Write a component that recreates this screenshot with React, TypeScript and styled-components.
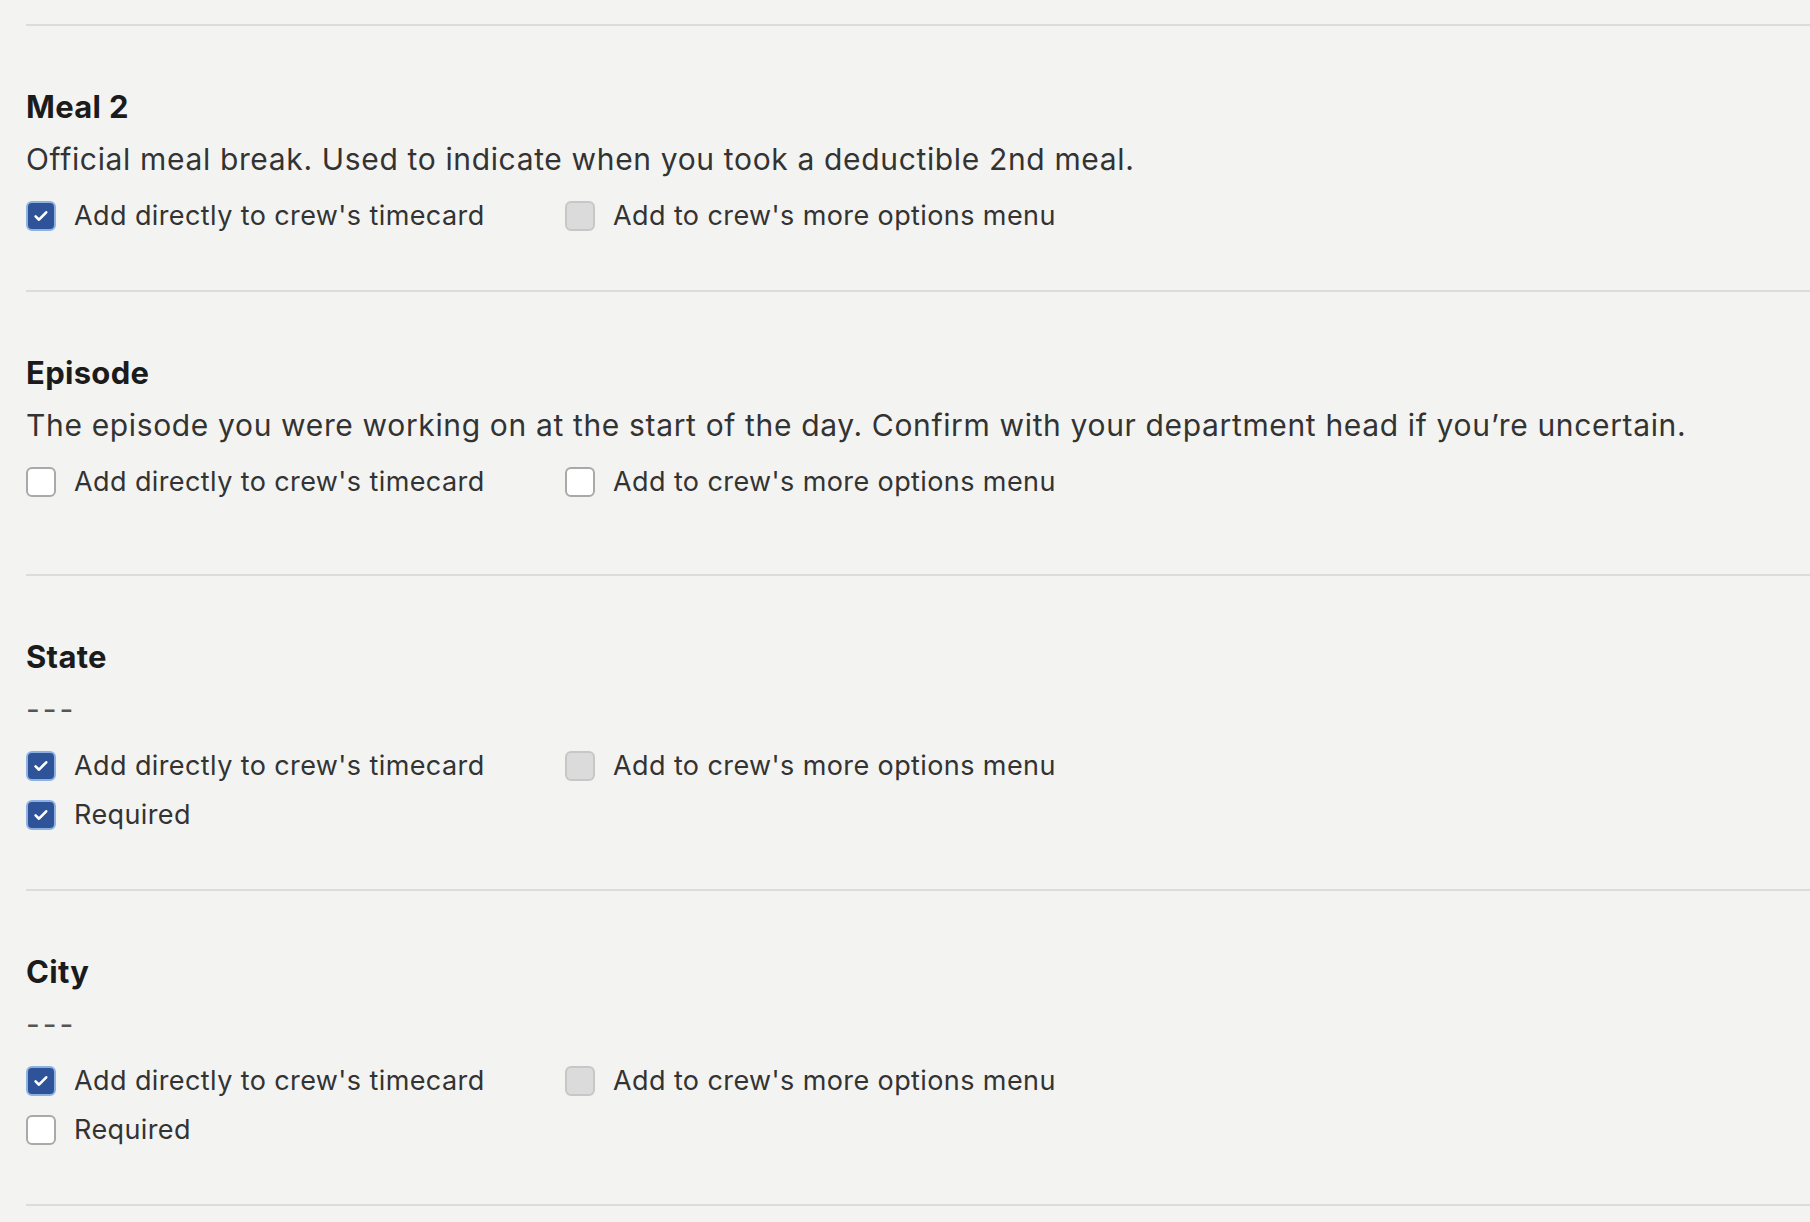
import React from "react";
import styled, { createGlobalStyle } from "styled-components";

type Field = {
  title: string
  description: string
  onTimecard: boolean
  moreOptions: "off" | "disabled"
  required?: boolean
  tall?: boolean
}

const fields: Field[] = [
  {
    title: "Meal 2",
    description: "Official meal break. Used to indicate when you took a deductible 2nd meal.",
    onTimecard: true,
    moreOptions: "disabled",
  },
  {
    title: "Episode",
    description: "The episode you were working on at the start of the day. Confirm with your department head if you’re uncertain.",
    onTimecard: false,
    moreOptions: "off",
    tall: true,
  },
  {
    title: "State",
    description: "---",
    onTimecard: true,
    moreOptions: "disabled",
    required: true,
  },
  {
    title: "City",
    description: "---",
    onTimecard: true,
    moreOptions: "disabled",
    required: false,
  },
]

type BoxState = "checked" | "unchecked" | "disabled"

function Check({ state, label }: { state: BoxState; label: string }) {
  return (
    <Option>
      <Box $state={state}>
        {state === "checked" ? (
          <svg width="18" height="18" viewBox="0 0 18 18" fill="none">
            <path d="M3.6 9.4l3.4 3.3 7.2-7.4" stroke="#fff" strokeWidth="2.6" strokeLinecap="round" strokeLinejoin="round" />
          </svg>
        ) : null}
      </Box>
      <Label>{label}</Label>
    </Option>
  )
}

export default function App() {
  return (
    <>
      <GlobalStyle />
      <Page>
        {fields.map((f) => (
          <Section key={f.title} $tall={f.tall}>
            <Title>{f.title}</Title>
            <Description $muted={f.description === "---"}>{f.description}</Description>
            <Options>
              <Check state={f.onTimecard ? "checked" : "unchecked"} label="Add directly to crew's timecard" />
              <Check state={f.moreOptions === "disabled" ? "disabled" : "unchecked"} label="Add to crew's more options menu" />
              {f.required !== undefined
                ? <Check state={f.required ? "checked" : "unchecked"} label="Required" />
                : null}
            </Options>
          </Section>
        ))}
        <Rule />
      </Page>
    </>
  )
}

const GlobalStyle = createGlobalStyle`
  html, body {
    margin: 0;
    background: #f3f3f2;
  }
  body {
    font-family: Inter, "Noto Sans", sans-serif;
    color: #333333;
  }
`

const Page = styled.div`
  padding: 24px 0 0 26px;
  min-height: 1222px;
  box-sizing: border-box;
  overflow: hidden;
`

const Section = styled.section<{ $tall?: boolean }>`
  border-top: 2px solid #dcdcdb;
  padding: 63px 0 ${(p) => (p.$tall ? 77 : 59)}px;
  display: flex;
  flex-direction: column;
`

const Rule = styled.div`
  border-top: 2px solid #dcdcdb;
`

const Title = styled.h3`
  margin: 0;
  font-size: 31px;
  line-height: 36px;
  font-weight: 700;
  color: #1b1b1b;
  letter-spacing: 0.3px;
`

const Description = styled.p<{ $muted?: boolean }>`
  margin: 14px 0 0;
  font-size: 30px;
  line-height: 40px;
  font-weight: 400;
  letter-spacing: ${(p) => (p.$muted ? "3px" : "0.65px")};
  color: ${(p) => (p.$muted ? "#555555" : "#333333")};
`

const Options = styled.div`
  margin-top: 21px;
  display: grid;
  grid-template-columns: 539px auto;
  justify-content: start;
  row-gap: 18px;
`

const Option = styled.label`
  display: flex;
  align-items: center;
  gap: 18px;
  height: 31px;
`

const Box = styled.span<{ $state: BoxState }>`
  width: 30px;
  height: 30px;
  box-sizing: border-box;
  border-radius: 6px;
  display: flex;
  align-items: center;
  justify-content: center;
  flex-shrink: 0;
  border: 2px solid ${(p) =>
    p.$state === "checked" ? "#8fb1e2" : p.$state === "disabled" ? "#c7c7c7" : "#a9a9a9"};
  background: ${(p) =>
    p.$state === "checked" ? "#2f5398" : p.$state === "disabled" ? "#dbdbdb" : "#ffffff"};
`

const Label = styled.span`
  font-size: 27px;
  line-height: 31px;
  color: #333333;
  letter-spacing: 0.4px;
  white-space: nowrap;
`
